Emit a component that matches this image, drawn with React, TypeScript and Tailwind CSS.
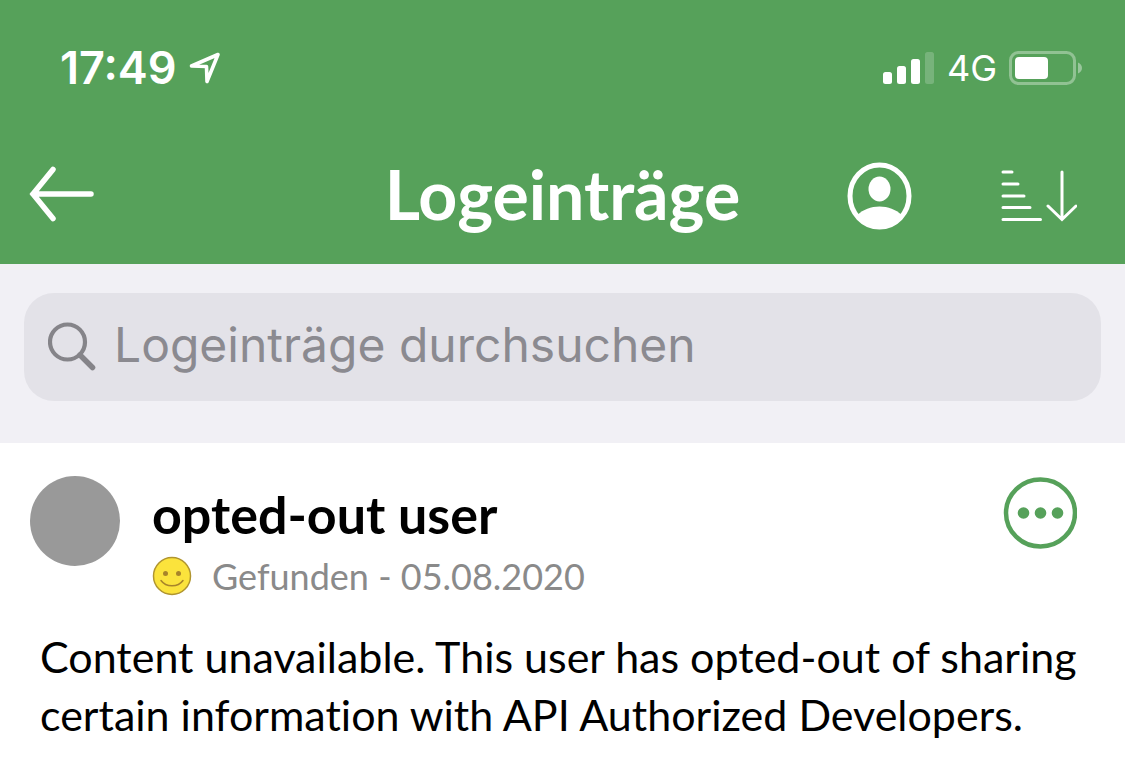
import { useState } from 'react';

interface LogEntry {
  id: number;
  user: string;
  type: string;
  date: string;
  message: string;
}

const entries: LogEntry[] = [
  {
    id: 1,
    user: 'opted-out user',
    type: 'Gefunden',
    date: '05.08.2020',
    message:
      'Content unavailable. This user has opted-out of sharing certain information with API Authorized Developers.',
  },
];

function LocationIcon() {
  return (
    <svg width="32" height="34" viewBox="0 0 32 34" fill="none" stroke="currentColor" strokeWidth="3.6" strokeLinejoin="round">
      <path d="M2.5 15 29 3.500 18 30.500 17.500 15.500Z" />
    </svg>
  );
}

function SignalIcon() {
  return (
    <svg width="52" height="32" viewBox="0 0 52 32" fill="currentColor">
      <rect x="0" y="20" width="9" height="12" rx="2.5" />
      <rect x="14" y="14" width="9" height="18" rx="2.5" />
      <rect x="28" y="7" width="9" height="25" rx="2.5" />
      <rect x="42" y="0" width="9" height="32" rx="2.5" opacity="0.2" />
    </svg>
  );
}

function BatteryIcon() {
  return (
    <svg width="74" height="34" viewBox="0 0 74 34">
      <rect x="1.5" y="1.5" width="64" height="31" rx="8" fill="none" stroke="#fff" strokeWidth="3" opacity="0.35" />
      <rect x="6" y="6" width="33" height="22" rx="4" fill="#fff" />
      <path d="M69 11.5c2.5 1 4 3 4 5.500s-1.500 4.500-4 5.500Z" fill="#fff" opacity="0.4" />
    </svg>
  );
}

function BackIcon() {
  return (
    <svg width="66" height="58" viewBox="0 0 66 58" fill="none" stroke="currentColor" strokeWidth="5.500" strokeLinecap="round">
      <path d="M5 29H63M25 4.500 5 29 25 53.500" />
    </svg>
  );
}

function ProfileIcon() {
  return (
    <svg width="66" height="68" viewBox="0 0 66 68">
      <ellipse cx="32.500" cy="34" rx="29.500" ry="31" fill="none" stroke="#fff" strokeWidth="5" />
      <ellipse cx="32.500" cy="27" rx="11" ry="12.500" fill="#fff" />
      <path d="M10.500 53C16 47.500 24 44.500 32.500 44.500S49 47.500 54.500 53C49 61 42 65.500 32.500 65.500S17 61 10.500 53Z" fill="#fff" />
    </svg>
  );
}

function SortIcon() {
  return (
    <svg width="76" height="52" viewBox="0 0 76 52" fill="none" stroke="currentColor" strokeWidth="3" strokeLinecap="round">
      <path d="M2 2H11M2 14H17M2 26H23M2 37.500H29M2 49.500H39.500" />
      <path d="M61 2V49M47 36 61 49.500 75 36" />
    </svg>
  );
}

function SearchIcon() {
  return (
    <svg width="48" height="50" viewBox="0 0 48 50" fill="none" stroke="currentColor" strokeLinecap="round">
      <circle cx="19.500" cy="20" r="17.500" strokeWidth="4.200" />
      <path d="M32 33 44.500 45.500" strokeWidth="5.500" />
    </svg>
  );
}

function SmileyIcon() {
  return (
    <svg width="40" height="40" viewBox="0 0 40 40">
      <circle cx="20" cy="20" r="18.500" fill="#fbe33c" stroke="#b0952f" strokeWidth="1.500" />
      <circle cx="13.500" cy="17.500" r="2.500" fill="#a8842a" />
      <circle cx="26.500" cy="17.500" r="2.500" fill="#a8842a" />
      <path d="M9 24.500C14 31.500 26 31.500 31 24.500" fill="none" stroke="#a8842a" strokeWidth="1.500" strokeLinecap="round" />
    </svg>
  );
}

function MoreIcon() {
  return (
    <svg width="74" height="74" viewBox="0 0 74 74">
      <ellipse cx="37.500" cy="37" rx="34.500" ry="33.500" fill="none" stroke="currentColor" strokeWidth="4.500" />
      <circle cx="20.500" cy="37" r="5.800" fill="currentColor" />
      <circle cx="37.500" cy="37" r="5.800" fill="currentColor" />
      <circle cx="54.500" cy="37" r="5.800" fill="currentColor" />
    </svg>
  );
}

function StatusBar() {
  return (
    <div className="flex items-center justify-between pl-[60px] pr-[42px] font-['Inter',sans-serif]">
      <div className="flex items-center gap-3">
        <span className="text-[45px] leading-[56px] font-semibold">17:49</span>
        <LocationIcon />
      </div>
      <div className="flex items-center gap-3">
        <SignalIcon />
        <span className="text-[36px] leading-[56px]">4G</span>
        <BatteryIcon />
      </div>
    </div>
  );
}

function Entry({ entry }: { entry: LogEntry }) {
  return (
    <article className="pt-[33px]">
      <div className="flex items-start pl-[30px] pr-12">
        <div className="size-[90px] rounded-full bg-[#999999]" />
        <div className="ml-8 flex-1">
          <h2 className="mb-1 text-[52px] leading-[76px] font-bold">{entry.user}</h2>
          <div className="flex items-center gap-5 text-[#8a8a8a]">
            <SmileyIcon />
            <p className="text-[36px] leading-10">
              {entry.type} - {entry.date}
            </p>
          </div>
        </div>
        <button type="button" aria-label="Mehr" className="text-[#56a15a]">
          <MoreIcon />
        </button>
      </div>
      <p className="mt-8 px-10 text-[43px] leading-[58px] [font-variant-ligatures:none]">{entry.message}</p>
    </article>
  );
}

export default function App() {
  const [query, setQuery] = useState('');

  return (
    <div className="min-h-screen bg-white font-['Lato',sans-serif] text-black">
      <header className="bg-[#56a15a] pt-10 pb-5 text-white">
        <StatusBar />
        <nav className="mt-12 grid h-[100px] grid-cols-[1fr_auto_1fr] items-center">
          <button type="button" aria-label="Zurück" className="justify-self-start pl-7">
            <BackIcon />
          </button>
          <h1 className="text-[68px] leading-[72px] font-bold">Logeinträge</h1>
          <div className="flex items-center gap-[88px] justify-self-end pt-1 pr-12">
            <button type="button" aria-label="Profil">
              <ProfileIcon />
            </button>
            <button type="button" aria-label="Sortieren">
              <SortIcon />
            </button>
          </div>
        </nav>
      </header>

      <div className="bg-[#f1f0f5] px-6 pt-[29px] pb-[42px] font-['Inter',sans-serif]">
        <label className="flex h-[108px] items-center gap-[18px] rounded-[30px] bg-[#e3e2e8] px-6 text-[#858489]">
          <SearchIcon />
          <input
            type="text"
            aria-label="Logeinträge durchsuchen"
            placeholder="Logeinträge durchsuchen"
            value={query}
            onChange={e => setQuery(e.target.value)}
            className="min-w-0 flex-1 bg-transparent pb-1 text-[48px] leading-[64px] text-black outline-none placeholder:text-[#8b8a90]"
          />
        </label>
      </div>

      <main>
        {entries.map(entry => (
          <Entry key={entry.id} entry={entry} />
        ))}
      </main>
    </div>
  );
}
